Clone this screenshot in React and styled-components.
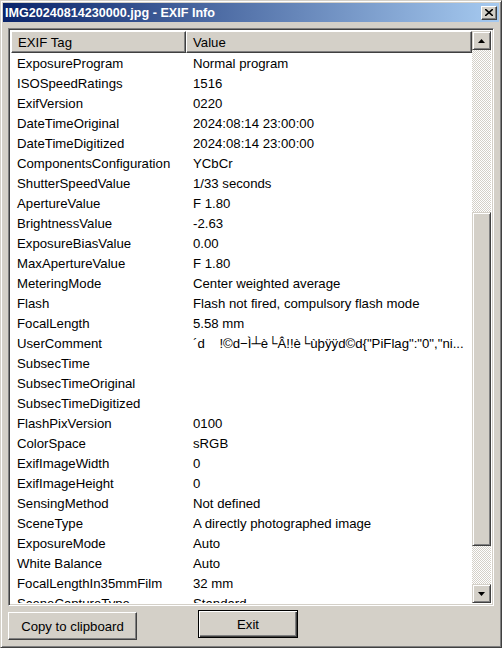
import React from 'react'
import styled, { createGlobalStyle } from 'styled-components'

const rows = [
  ['ExposureProgram', 'Normal program'],
  ['ISOSpeedRatings', '1516'],
  ['ExifVersion', '0220'],
  ['DateTimeOriginal', '2024:08:14 23:00:00'],
  ['DateTimeDigitized', '2024:08:14 23:00:00'],
  ['ComponentsConfiguration', 'YCbCr'],
  ['ShutterSpeedValue', '1/33 seconds'],
  ['ApertureValue', 'F 1.80'],
  ['BrightnessValue', '-2.63'],
  ['ExposureBiasValue', '0.00'],
  ['MaxApertureValue', 'F 1.80'],
  ['MeteringMode', 'Center weighted average'],
  ['Flash', 'Flash not fired, compulsory flash mode'],
  ['FocalLength', '5.58 mm'],
  ['UserComment', '´d    !©d−Ì┴è└Â!!è└ùþÿÿd©d{"PiFlag":"0","ni...'],
  ['SubsecTime', ''],
  ['SubsecTimeOriginal', ''],
  ['SubsecTimeDigitized', ''],
  ['FlashPixVersion', '0100'],
  ['ColorSpace', 'sRGB'],
  ['ExifImageWidth', '0'],
  ['ExifImageHeight', '0'],
  ['SensingMethod', 'Not defined'],
  ['SceneType', 'A directly photographed image'],
  ['ExposureMode', 'Auto'],
  ['White Balance', 'Auto'],
  ['FocalLengthIn35mmFilm', '32 mm'],
  ['SceneCaptureType', 'Standard'],
]

const GlobalStyle = createGlobalStyle`
  html, body {
    margin: 0;
    padding: 0;
    background: #d4d0c8;
  }
  * { box-sizing: border-box; }
`

const Window = styled.div`
  width: 502px;
  height: 648px;
  background: #d4d0c8;
  border: 1px solid;
  border-color: #d4d0c8 #404040 #404040 #d4d0c8;
  box-shadow: inset 1px 1px 0 #fff, inset -1px -1px 0 #808080;
  padding: 2px;
  display: flex;
  flex-direction: column;
  font-family: 'Liberation Sans', Arial, sans-serif;
  font-size: 13.2px;
  color: #000;
`

const TitleBar = styled.div`
  height: 19px;
  flex: none;
  display: flex;
  align-items: center;
  justify-content: space-between;
  padding: 0 2px 0 2px;
  background: linear-gradient(to right, #0a246a, #a6caf0);
`

const Title = styled.span`
  color: #fff;
  font-family: 'Liberation Sans', Arial, sans-serif;
  font-weight: bold;
  font-size: 12.6px;
  transform: scaleY(1.08);
`

const CloseBtn = styled.div`
  width: 16px;
  height: 14px;
  background: #d4d0c8;
  border: 1px solid;
  border-color: #fff #404040 #404040 #fff;
  box-shadow: inset -1px -1px 0 #808080;
  display: flex;
  align-items: center;
  justify-content: center;
`

const Body = styled.div`
  flex: 1;
  display: flex;
  flex-direction: column;
  padding: 6px 5px 4px 5px;
`

const ListView = styled.div`
  height: 578px;
  flex: none;
  display: flex;
  border: 1px solid;
  border-color: #808080 #fff #fff #808080;
  box-shadow: inset 1px 1px 0 #404040, inset -1px -1px 0 #d4d0c8;
  padding: 2px;
  background: #fff;
`

const Table = styled.div`
  flex: 1;
  overflow: hidden;
  display: flex;
  flex-direction: column;
`

const HeaderRow = styled.div`
  display: grid;
  grid-template-columns: 175px 1fr;
  height: 22px;
  flex: none;
`

const HeaderCell = styled.div`
  background: #d4d0c8;
  border: 1px solid;
  border-color: #fff #404040 #404040 #fff;
  box-shadow: inset -1px -1px 0 #808080;
  padding: 0 6px;
  display: flex;
  align-items: center;
`

const Row = styled.div`
  display: grid;
  grid-template-columns: 176px 1fr;
  height: 20px;
  flex: none;
  align-items: center;
  white-space: pre;
`

const Cell = styled.div`
  padding-left: 6px;
  overflow: hidden;
`

const ScrollBar = styled.div`
  width: 19px;
  flex: none;
  display: flex;
  flex-direction: column;
  background: repeating-conic-gradient(#d4d0c8 0% 25%, #fff 0% 50%) 0 0 / 2px 2px;
`

const Raised = styled.div`
  background: #d4d0c8;
  border: 1px solid;
  border-color: #d4d0c8 #404040 #404040 #d4d0c8;
  box-shadow: inset 1px 1px 0 #fff, inset -1px -1px 0 #808080;
  display: flex;
  align-items: center;
  justify-content: center;
`

const ArrowBtn = styled(Raised)`
  height: 19px;
  flex: none;
`

const Track = styled.div`
  flex: ${(p) => p.$grow};
`

const Thumb = styled(Raised)`
  height: 334px;
  flex: none;
`

const Footer = styled.div`
  display: flex;
  align-items: flex-start;
  gap: 61px;
  padding-top: 4px;
`

const Button = styled.button`
  font-family: 'Liberation Sans', Arial, sans-serif;
  font-size: 13.2px;
  color: #000;
  background: #d4d0c8;
  height: 28px;
  width: ${(p) => p.$w}px;
  margin-top: ${(p) => (p.$default ? 0 : 2)}px;
  border: 1px solid;
  border-color: ${(p) => (p.$default ? '#000' : '#fff #404040 #404040 #fff')};
  box-shadow: ${(p) =>
    p.$default
      ? 'inset 1px 1px 0 #fff, inset -1px -1px 0 #404040, inset -2px -2px 0 #808080'
      : 'inset -1px -1px 0 #808080'};
  padding: 0;
`

const Tri = ({ up }) => (
  <svg width="7" height="4" viewBox="0 0 7 4">
    <path d={up ? 'M3.5 0 L7 4 L0 4 Z' : 'M0 0 L7 0 L3.5 4 Z'} fill="#000" />
  </svg>
)

export default function App() {
  return (
    <>
      <GlobalStyle />
      <Window>
        <TitleBar>
          <Title>IMG20240814230000.jpg - EXIF Info</Title>
          <CloseBtn>
            <svg width="8" height="7" viewBox="0 0 8 7">
              <path d="M0 0 L8 7 M8 0 L0 7" stroke="#000" strokeWidth="1.6" />
            </svg>
          </CloseBtn>
        </TitleBar>
        <Body>
          <ListView>
            <Table>
              <HeaderRow>
                <HeaderCell>EXIF Tag</HeaderCell>
                <HeaderCell>Value</HeaderCell>
              </HeaderRow>
              {rows.map(([tag, val]) => (
                <Row key={tag}>
                  <Cell>{tag}</Cell>
                  <Cell>{val}</Cell>
                </Row>
              ))}
            </Table>
            <ScrollBar>
              <ArrowBtn>
                <Tri up />
              </ArrowBtn>
              <Track $grow={162} />
              <Thumb />
              <Track $grow={38} />
              <ArrowBtn>
                <Tri />
              </ArrowBtn>
            </ScrollBar>
          </ListView>
          <Footer>
            <Button $w={129}>Copy to clipboard</Button>
            <Button $w={100} $default>
              Exit
            </Button>
          </Footer>
        </Body>
      </Window>
    </>
  )
}
